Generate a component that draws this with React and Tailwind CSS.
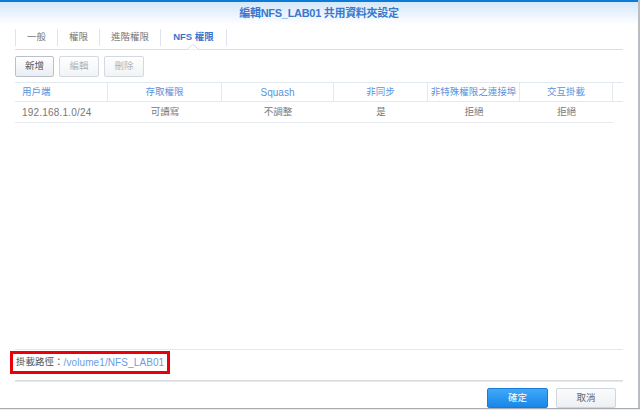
export default function App() {
  const cols = [
    { label: "用戶端", w: "w-[93px]", align: "justify-start pl-[7px]" },
    { label: "存取權限", w: "w-[114px]", align: "justify-center" },
    { label: "Squash", w: "w-[112px]", align: "justify-center" },
    { label: "非同步", w: "w-[94px]", align: "justify-center" },
    { label: "非特殊權限之連接埠", w: "w-[92px]", align: "justify-center" },
    { label: "交互掛載", w: "w-[93px]", align: "justify-center" },
  ];
  const row = ["192.168.1.0/24", "可讀寫", "不調整", "是", "拒絕", "拒絕"];
  const tabs = [
    { label: "一般", w: "w-[42px]" },
    { label: "權限", w: "w-[42px]" },
    { label: "進階權限", w: "w-[61px]" },
    { label: "NFS 權限", w: "w-[67px]", active: true },
  ];

  return (
    <div className="w-[640px] h-[410px] overflow-hidden bg-[#cfd3d8] font-['Liberation_Sans','Noto_Sans_CJK_TC',sans-serif] flex flex-col">
      <div className="flex h-[408px]">
        <div className="w-[638px] h-full bg-white flex flex-col">
          <div className="h-[2px] bg-[#0d7bd8]" />
          <div className="h-[23px] bg-gradient-to-b from-[#d4e8fa] to-white flex items-center justify-center">
            <span className="text-[11px] font-bold text-[#3a78cc] tracking-[-0.3px]">
              編輯NFS_LAB01 共用資料夾設定
            </span>
          </div>

          {/* tabs */}
          <div className="relative mx-[15px] h-[25px] border-b border-[#d9dde2] flex items-center">
            {tabs.map((t, i) => (
              <div
                key={t.label}
                className={`${t.w} h-[17px] flex items-center justify-center border-l border-[#dfe4ea] ${
                  i === tabs.length - 1 ? "border-r" : ""
                } text-[9.5px] ${t.active ? "text-[#3674cc] font-bold" : "text-[#777]"}`}
              >
                {t.label}
              </div>
            ))}
            <svg
              className="absolute left-[172px] bottom-[-1px]"
              width="12"
              height="6"
              viewBox="0 0 12 6"
            >
              <path d="M0 5.5 L6 0.5 L12 5.5" fill="white" stroke="#d9dde2" strokeWidth="1" />
            </svg>
          </div>

          {/* toolbar */}
          <div className="mx-[15px] mt-[6px] flex gap-[5px]">
            <button className="w-[39px] h-[21px] rounded-[2px] border border-[#b8c1cb] bg-gradient-to-b from-white to-[#eaedf1] text-[9.5px] text-[#555]">
              新增
            </button>
            <button className="w-[40px] h-[21px] rounded-[2px] border border-[#d3d9df] bg-gradient-to-b from-white to-[#f1f3f5] text-[9.5px] text-[#b0b5ba]">
              編輯
            </button>
            <button className="w-[40px] h-[21px] rounded-[2px] border border-[#d3d9df] bg-gradient-to-b from-white to-[#f1f3f5] text-[9.5px] text-[#b0b5ba]">
              刪除
            </button>
          </div>

          {/* table */}
          <div className="mx-[15px] mt-[5px]">
            <div className="flex h-[20px] border-t border-b border-[#e3e9f0]">
              {cols.map((c) => (
                <div
                  key={c.label}
                  className={`${c.w} flex items-center ${c.align} border-r border-[#e3e9f0] text-[#5b93dc] ${
                    c.label === "Squash" ? "text-[10px]" : "text-[9.5px]"
                  }`}
                >
                  {c.label}
                </div>
              ))}
              <div className="flex-1" />
            </div>
            <div className="flex h-[21px] w-[598px] border-b border-[#e6eaee]">
              {row.map((v, i) => (
                <div
                  key={i}
                  className={`${cols[i].w} flex items-center ${cols[i].align} text-[#777] ${
                    i === 0 ? "text-[10px] tracking-[0.2px]" : "text-[9.5px]"
                  }`}
                >
                  {v}
                </div>
              ))}
            </div>
          </div>

          <div className="flex-1" />

          {/* mount path */}
          <div className="mx-[15px] border-t border-[#e6e9ec]" />
          <div className="ml-[10px] mt-[1px] w-[160px] h-[23px] border-[3px] border-[#e8000b] flex items-center pl-[3px] text-[10px] whitespace-nowrap">
            <span className="text-[#555] text-[9.5px]">掛載路徑：</span>
            <span className="text-[#6a9de3] tracking-[0.1px]">/volume1/NFS_LAB01</span>
          </div>
          <div className="mx-[15px] mt-[6px] h-[2px] bg-gradient-to-b from-[#d2d5d9] to-[#eceef0]" />

          {/* footer */}
          <div className="flex justify-end gap-[8px] pr-[22px] mt-[6px]">
            <button className="w-[61px] h-[20px] rounded-[2px] border border-[#1a7ad6] bg-gradient-to-b from-[#3fa9f7] to-[#1886ea] text-white text-[9.5px]">
              確定
            </button>
            <button className="w-[60px] h-[20px] rounded-[2px] border border-[#cfd6de] bg-gradient-to-b from-[#fafbfc] to-[#edf0f3] text-[#666] text-[9.5px]">
              取消
            </button>
          </div>
        </div>
        <div className="w-[2px] h-full bg-[#b9bec4]" />
      </div>
      <div className="h-[1px] bg-[#a9adb2]" />
      <div className="h-[1px] bg-[#e9eaeb]" />
    </div>
  );
}
